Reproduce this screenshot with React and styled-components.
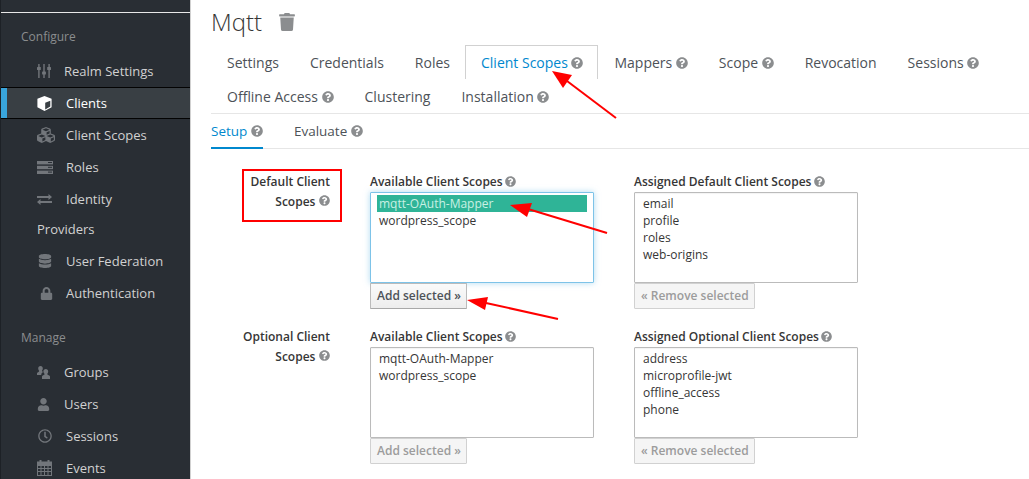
import React from "react";
import styled, { createGlobalStyle } from "styled-components";
import {
  FaCubes, FaDatabase, FaLock, FaUser, FaRegClock, FaQuestionCircle, FaTrash,
} from "react-icons/fa";

const Global = createGlobalStyle`
  html, body { margin: 0; padding: 0; height: 100%; background: #fff; }
  body { font-family: "Open Sans", "Noto Sans", sans-serif; color: #363636; overflow: hidden; }
  * { box-sizing: border-box; }
`;

const Page = styled.div`
  position: relative;
  display: flex;
  width: 1029px;
  height: 479px;
  overflow: hidden;
`;

const Sidebar = styled.nav`
  width: 191px;
  flex: none;
  height: 479px;
  background: #292e34;
  border-right: 1px solid #d1d1d1;
  border-left: 1px solid #1d2126;
  padding-top: 12px;
  overflow: hidden;
`;

const TopLine = styled.div`
  height: 1px;
  background: #e8e8e8;
  margin-bottom: 16px;
`;

const SectionTitle = styled.div`
  font-size: 12px;
  line-height: 16px;
  color: #8b8d8f;
  padding-left: 20px;
  margin: ${(p) => p.$margin || "0 0 10px"};
`;

const NavItem = styled.div`
  display: flex;
  align-items: center;
  height: 32px;
  padding-left: ${(p) => (p.$active ? "0" : "36px")};
  color: ${(p) => (p.$active ? "#fff" : "#d1d1d1")};
  font-size: 13px;
  background: ${(p) => (p.$active ? "#393f44" : "transparent")};
  border-top: ${(p) => (p.$active ? "1px solid #030303" : "0")};
  border-bottom: ${(p) => (p.$active ? "1px solid #030303" : "0")};
`;

const ActiveBar = styled.span`
  width: 6px;
  height: 100%;
  background: #39a5dc;
  margin-right: 30px;
  flex: none;
`;

const NavIcon = styled.span`
  display: inline-flex;
  align-items: center;
  width: ${(p) => p.$w || 29}px;
  padding-left: ${(p) => p.$pl || 0}px;
  flex: none;
  color: ${(p) => (p.$active ? "#fff" : "#72767b")};
  font-size: ${(p) => p.$size || 14}px;
`;

const NavWrap = styled.div`
  padding: 0 0 2px 36px;
  height: 30px;
  display: flex;
  align-items: center;
  color: #d1d1d1;
  font-size: 13px;
`;

const Main = styled.main`
  flex: 1;
  min-width: 0;
  padding-left: 20px;
`;

const TitleRow = styled.div`
  display: flex;
  align-items: center;
  height: 45px;
  padding-bottom: 1px;
`;

const Title = styled.h1`
  margin: 0;
  font-size: 24px;
  font-weight: 300;
  color: #363636;
  line-height: 30px;
`;

const TrashIcon = styled(FaTrash)`
  margin-left: 17px;
  width: 16px;
  height: 18px;
  color: #8b8d8f;
`;

const TabBar = styled.div`
  border-bottom: 1px solid #e6e6e6;
  height: 69px;
`;

const TabRow = styled.div`
  display: flex;
  height: ${(p) => p.$h}px;
  margin-bottom: ${(p) => p.$mb || 0}px;
  padding-bottom: ${(p) => p.$pb || 0}px;
`;

const Tab = styled.div`
  display: flex;
  align-items: center;
  height: 100%;
  padding: 0 14px 0 15px;
  font-size: 14px;
  white-space: nowrap;
  color: ${(p) => (p.$active ? "#0088ce" : "#4d5258")};
  border: 1px solid ${(p) => (p.$active ? "#d1d1d1" : "transparent")};
  border-bottom: 0;
  background: #fff;
`;

const Help = styled(FaQuestionCircle)`
  color: #8b8d8f;
  width: ${(p) => p.$s || 12}px;
  height: ${(p) => p.$s || 12}px;
  margin-left: ${(p) => p.$ml || 3.6}px;
  flex: none;
`;

const SubTabs = styled.div`
  display: flex;
  height: 35px;
  border-bottom: 1px solid #e6e6e6;
`;

const SubTab = styled.div`
  display: flex;
  align-items: center;
  height: 35px;
  font-size: 13.5px;
  margin-right: 31px;
  color: ${(p) => (p.$active ? "#0088ce" : "#4d5258")};
  border-bottom: 2px solid ${(p) => (p.$active ? "#0088ce" : "transparent")};
`;

const Form = styled.div`
  display: flex;
  flex-direction: column;
`;

const FormRow = styled.div`
  display: grid;
  grid-template-columns: 119px 224px 224px;
  column-gap: 40px;
  margin-top: ${(p) => p.$mt}px;
`;

const RowLabel = styled.div`
  font-size: 12px;
  font-weight: 600;
  line-height: 20px;
  text-align: right;
  color: #363636;
  padding-left: 24px;
`;

const Column = styled.div`
  display: flex;
  flex-direction: column;
`;

const ColLabel = styled.div`
  display: flex;
  align-items: center;
  height: 18px;
  font-size: 12px;
  font-weight: 600;
  white-space: nowrap;
  color: #363636;
  margin-bottom: 2px;
`;

const ListBox = styled.div`
  height: 91px;
  padding: 2px 6px;
  font-size: 12px;
  line-height: 17px;
  color: #363636;
  background: #fff;
  border: 1px solid ${(p) => (p.$focus ? "#7dc3e8" : "#bbb")};
  border-radius: 1px;
  box-shadow: ${(p) => (p.$focus ? "0 0 6px rgba(125,195,232,.6)" : "inset 0 1px 1px rgba(0,0,0,.05)")};
`;

const Option = styled.div`
  padding: 0 2px;
  height: 17px;
  color: ${(p) => (p.$selected ? "#c9f0e4" : "#363636")};
  background: ${(p) => (p.$selected ? "#2fb497" : "transparent")};
`;

const Btn = styled.div`
  align-self: flex-start;
  height: 26px;
  display: flex;
  align-items: center;
  padding: 0 5.5px 2px 6px;
  font-size: 12px;
  font-weight: 600;
  white-space: nowrap;
  color: ${(p) => (p.$disabled ? "#9c9c9c" : "#4d5258")};
  background: ${(p) => (p.$disabled ? "#f5f5f5" : "linear-gradient(#fafafa, #ededed)")};
  border: 1px solid ${(p) => (p.$disabled ? "#d1d1d1" : "#bbb")};
  border-bottom-color: ${(p) => (p.$disabled ? "#d1d1d1" : "#a8a8a8")};
  border-radius: 1px;
`;

const Annotations = styled.svg`
  position: absolute;
  left: 0;
  top: 0;
  width: 1029px;
  height: 479px;
  pointer-events: none;
`;

const Nav = ({ icon: Icon, w, pl, size, active, children }) => (
  <NavItem $active={active}>
    {active && <ActiveBar />}
    <NavIcon $w={w} $pl={pl} $size={size} $active={active}><Icon /></NavIcon>
    {children}
  </NavItem>
);

const SlidersIcon = () => (
  <svg width="14" height="14" viewBox="0 0 14 14" fill="currentColor">
    <rect x="1.2" y="0" width="1.4" height="14" />
    <rect x="6.3" y="0" width="1.4" height="14" />
    <rect x="11.4" y="0" width="1.4" height="14" />
    <rect x="0" y="3" width="3.8" height="3" rx=".5" />
    <rect x="5.1" y="7.5" width="3.8" height="3" rx=".5" />
    <rect x="10.2" y="3" width="3.8" height="3" rx=".5" />
  </svg>
);

const CubeIcon = () => (
  <svg width="15" height="15" viewBox="0 0 15 15" fill="currentColor">
    <path fillRule="evenodd" d="M7.5 0 14.6 2.7V11.2L7.5 15 .4 11.2V2.7ZM8.2 6.7V13.4L13.3 10.6V4.8Z" />
  </svg>
);

const ServerIcon = () => (
  <svg width="16" height="13" viewBox="0 0 16 13" fill="currentColor">
    <rect x="0" y="0" width="16" height="3.4" />
    <rect x="0" y="4.8" width="16" height="3.4" />
    <rect x="0" y="9.6" width="16" height="3.4" />
    <rect x="11" y="1" width="4" height="1" fill="#292e34" />
    <rect x="11" y="5.8" width="4" height="1" fill="#292e34" />
    <rect x="11" y="10.6" width="4" height="1" fill="#292e34" />
  </svg>
);

const ExchangeIcon = () => (
  <svg width="15" height="11" viewBox="0 0 15 11" fill="currentColor">
    <path d="M0 2h11.5V0L15 3l-3.500 3V4H0Z" />
    <path d="M15 7H3.500V5L0 8l3.500 3V9H15Z" />
  </svg>
);

const GroupsIcon = () => (
  <svg width="13" height="13" viewBox="0 0 13 13" fill="currentColor">
    <path d="M3.500 0C5 0 5.800 1.200 5.800 2.500c0 .9-.3 1.700-.9 2.300.2.700.6 1 1.200 1.300-.9.500-1.700 1.300-1.900 2.900H0V7.200c0-.9 2-1.200 2.200-2.300C1.500 4.300 1.200 3.400 1.200 2.500 1.200 1.200 2 0 3.500 0Z" />
    <path d="M8.800 3c1.500 0 2.400 1.200 2.400 2.600 0 .9-.3 1.800-1 2.400.2 1.100 2.800 1.300 2.800 2.400V13H5v-2.600c0-1.100 2.500-1.300 2.700-2.400-.7-.6-1.300-1.500-1.300-2.400C6.400 4.200 7.300 3 8.800 3Z" />
  </svg>
);

const CalendarIcon = () => (
  <svg width="15" height="16" viewBox="0 0 15 16" fill="none" stroke="currentColor" strokeWidth="1">
    <rect x=".5" y="2" width="14" height="13.500" />
    <path d="M.5 5.500h14M.5 8.500h14M.5 11.500h14M4 5.500v10M7.500 5.500v10M11 5.500v10" />
    <path d="M3.500 0v3.500M11.500 0v3.500" strokeWidth="2" />
    <rect x="0" y="2" width="15" height="3" fill="currentColor" stroke="none" />
  </svg>
);

const Arrow = ({ tail, neck, a, b, tip }) => (
  <g>
    <line x1={tail[0]} y1={tail[1]} x2={neck[0]} y2={neck[1]} stroke="#f00" strokeWidth="2" />
    <polygon points={`${tip[0]},${tip[1]} ${a[0]},${a[1]} ${b[0]},${b[1]}`} fill="#f00" />
  </g>
);

const Field = ({ title, selected, focus, items, button, disabled }) => (
  <Column>
    <ColLabel>{title}<Help $s={11} $ml={2.5} /></ColLabel>
    <ListBox $focus={focus}>
      {items.map((i) => <Option key={i} $selected={selected === i}>{i}</Option>)}
    </ListBox>
    <Btn $disabled={disabled}>{button}</Btn>
  </Column>
);

export default function App() {
  return (
    <Page>
      <Global />
      <Sidebar>
        <TopLine />
        <SectionTitle>Configure</SectionTitle>
        <Nav icon={SlidersIcon} w={27}>Realm Settings</Nav>
        <Nav icon={CubeIcon} active>Clients</Nav>
        <Nav icon={FaCubes} size={18}>Client Scopes</Nav>
        <Nav icon={ServerIcon}>Roles</Nav>
        <Nav icon={ExchangeIcon}>Identity</Nav>
        <NavWrap>Providers</NavWrap>
        <Nav icon={FaDatabase} pl={1}>User Federation</Nav>
        <Nav icon={FaLock} pl={3} size={13}>Authentication</Nav>
        <SectionTitle $margin="21px 0 10px">Manage</SectionTitle>
        <Nav icon={GroupsIcon} w={27}>Groups</Nav>
        <Nav icon={FaUser} w={27} size={13}>Users</Nav>
        <Nav icon={FaRegClock} pl={1}>Sessions</Nav>
        <Nav icon={CalendarIcon}>Events</Nav>
      </Sidebar>
      <Main>
        <TitleRow>
          <Title>Mqtt</Title>
          <TrashIcon />
        </TitleRow>
        <TabBar>
          <TabRow $h={34} $mb={1}>
            <Tab>Settings</Tab>
            <Tab>Credentials</Tab>
            <Tab>Roles</Tab>
            <Tab $active>Client Scopes<Help /></Tab>
            <Tab>Mappers<Help /></Tab>
            <Tab>Scope<Help /></Tab>
            <Tab>Revocation</Tab>
            <Tab>Sessions<Help /></Tab>
          </TabRow>
          <TabRow $h={33} $pb={1}>
            <Tab>Offline Access<Help /></Tab>
            <Tab>Clustering</Tab>
            <Tab>Installation<Help /></Tab>
          </TabRow>
        </TabBar>
        <SubTabs>
          <SubTab $active>Setup<Help /></SubTab>
          <SubTab>Evaluate<Help /></SubTab>
        </SubTabs>
        <Form>
          <FormRow $mt={23}>
            <RowLabel>Default Client Scopes<Help $s={11} /></RowLabel>
            <Field title="Available Client Scopes" focus selected="mqtt-OAuth-Mapper" items={["mqtt-OAuth-Mapper", "wordpress_scope"]} button="Add selected »" />
            <Field title="Assigned Default Client Scopes" items={["email", "profile", "roles", "web-origins"]} button="« Remove selected" disabled />
          </FormRow>
          <FormRow $mt={18}>
            <RowLabel>Optional Client Scopes<Help $s={11} /></RowLabel>
            <Field title="Available Client Scopes" items={["mqtt-OAuth-Mapper", "wordpress_scope"]} button="Add selected »" disabled />
            <Field title="Assigned Optional Client Scopes" items={["address", "microprofile-jwt", "offline_access", "phone"]} button="« Remove selected" disabled />
          </FormRow>
        </Form>
      </Main>
      <Annotations viewBox="0 0 1029 479">
        <rect x="243" y="170" width="98" height="51" fill="none" stroke="#f00" strokeWidth="2" />
        <Arrow tail={[616, 118]} neck={[567, 81]} tip={[552, 71]} a={[572, 75]} b={[563, 88]} />
        <Arrow tail={[607, 233]} neck={[528, 209]} tip={[510, 205]} a={[532, 203]} b={[527, 217]} />
        <Arrow tail={[558, 319]} neck={[486, 303]} tip={[467, 300]} a={[488, 297]} b={[485, 310]} />
      </Annotations>
    </Page>
  );
}
